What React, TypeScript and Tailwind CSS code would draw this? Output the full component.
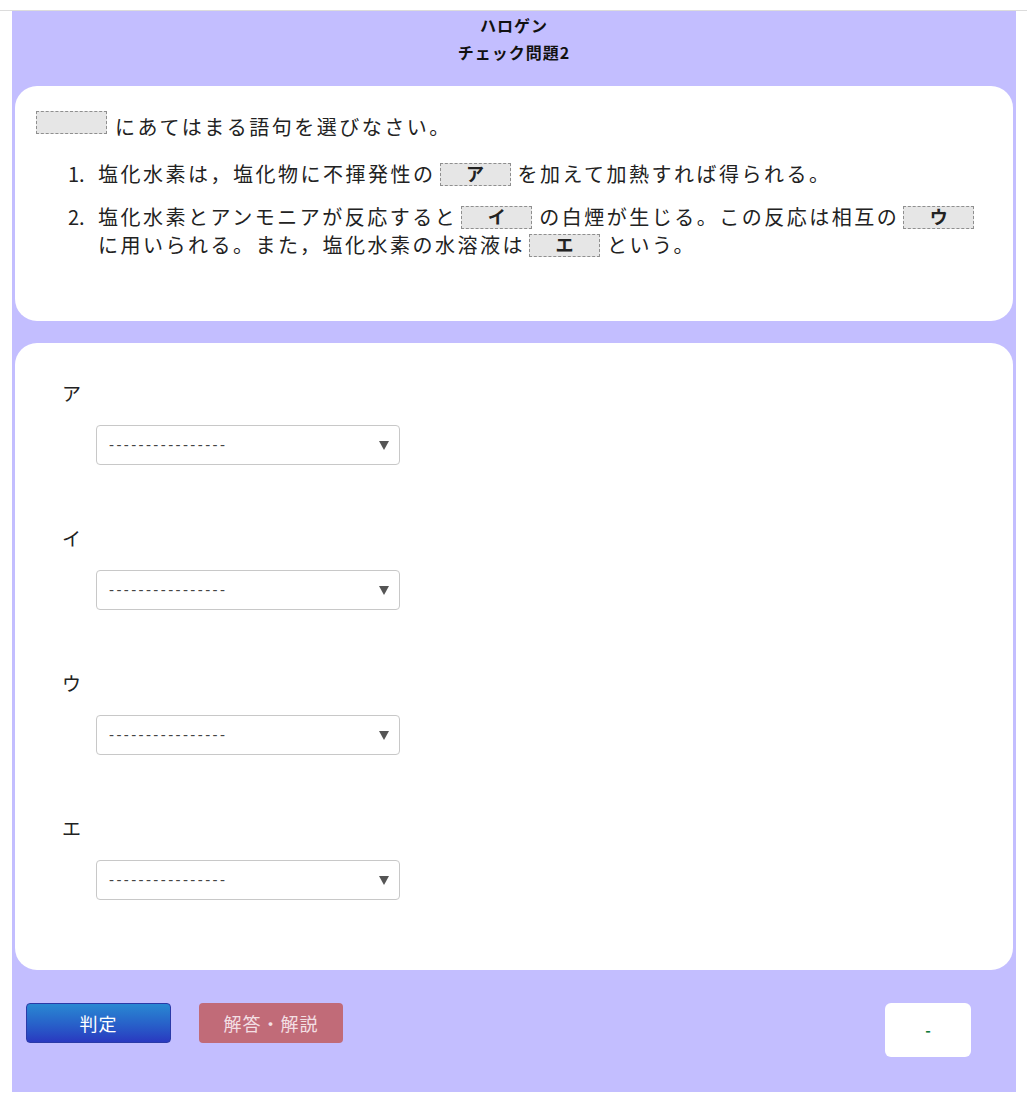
import React from 'react';

const jp = { fontFamily: '"Noto Sans CJK JP", "Noto Sans", sans-serif' };

const Blank = ({ label, first }: { label?: string; first?: boolean }) => (
    <span
        className={
            (first ? 'mr-[8px] ' : 'ml-[4px] mr-[7px] ') +
            'inline-flex h-[23px] w-[71px] items-center justify-center border border-dashed border-[#8f8f8f] bg-[#e6e6e6] pb-[3px] align-[1px] text-[18px] font-bold leading-none tracking-normal text-[#222]'
        }
    >
        {label}
    </span>
);

const FakeSelect = () => (
    <div className="flex h-[40px] w-[304px] items-center justify-between rounded-[4px] border border-[#c8c8c8] bg-white pl-[12px] pr-[10px]">
        <span className="text-[15px] tracking-[2.4px] text-[#444]" style={{ fontFamily: '"Liberation Sans", Arial, sans-serif' }}>
            ----------------
        </span>
        <svg width="10" height="9" viewBox="0 0 10 9">
            <path d="M0 0 H10 L5 9 Z" fill="#555" />
        </svg>
    </div>
);

const Field = ({ label, last }: { label: string; last?: boolean }) => (
    <div className={last ? '' : 'mb-[59px]'}>
        <div className="h-[28px] text-[19px] leading-[28px] text-[#222]">{label}</div>
        <div className="mt-[18px] pl-[34px]">
            <FakeSelect />
        </div>
    </div>
);

export default function App() {
    return (
        <div className="min-h-screen bg-white pt-[10px]" style={jp}>
            <div className="border-t border-[#dcdcdc]">
                <div className="ml-[12px] w-[1004px] bg-[#c3beff] px-[3px] pb-[35px]">
                    {/* header */}
                    <div className="pt-[1px] text-center text-[16px] font-bold leading-[27px] tracking-[1px] text-[#111]">
                        <div>ハロゲン</div>
                        <div>チェック問題2</div>
                    </div>

                    {/* question card */}
                    <div className="mt-[20px] h-[235px] rounded-[22px] bg-white pl-[21px] pt-[25px] text-[20px] leading-[28px] tracking-[2.5px] text-[#222]">
                        <div>
                            <Blank first />
                            にあてはまる語句を選びなさい。
                        </div>
                        <div className="mt-[19px] pl-[32px]">
                            <div className="flex">
                                <span className="w-[30px] shrink-0 tracking-normal">1.</span>
                                <span>
                                    塩化水素は，塩化物に不揮発性の<Blank label="ア" />を加えて加熱すれば得られる。
                                </span>
                            </div>
                            <div className="mt-[15px] flex">
                                <span className="w-[30px] shrink-0 tracking-normal">2.</span>
                                <span>
                                    塩化水素とアンモニアが反応すると<Blank label="イ" />の白煙が生じる。この反応は相互の<Blank label="ウ" />
                                    <br />
                                    に用いられる。また，塩化水素の水溶液は<Blank label="エ" />という。
                                </span>
                            </div>
                        </div>
                    </div>

                    {/* answer card */}
                    <div className="mt-[22px] rounded-[22px] bg-white pb-[70px] pl-[47px] pt-[36px]">
                        <Field label="ア" />
                        <Field label="イ" />
                        <Field label="ウ" />
                        <Field label="エ" last />
                    </div>

                    {/* buttons */}
                    <div className="mt-[33px] flex items-start">
                        <button className="ml-[11px] flex h-[40px] w-[145px] items-center justify-center rounded-[4px] border border-[#2a3aa8] bg-gradient-to-b from-[#2a88d2] to-[#2a38c0] text-[18px] tracking-[1px] text-white">
                            判定
                        </button>
                        <button className="ml-[28px] flex h-[40px] w-[144px] items-center justify-center rounded-[4px] bg-[#c16b78] text-[18px] tracking-[1px] text-[#f3dfe3]">
                            解答・解説
                        </button>
                        <div className="ml-auto mr-[42px] flex h-[54px] w-[86px] items-center justify-center rounded-[6px] bg-white text-[15px] font-bold text-[#0f7a3a]">
                            -
                        </div>
                    </div>
                </div>
            </div>
        </div>
    );
}
